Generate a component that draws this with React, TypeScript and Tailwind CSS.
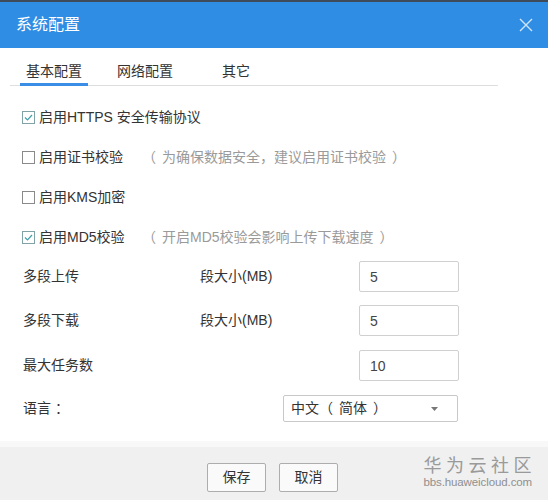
import React, { useState } from 'react';

const FONT = { fontFamily: "'Liberation Sans', 'Noto Sans CJK SC', sans-serif" };

const tabs = ['基本配置', '网络配置', '其它'];

const options = [
  { label: '启用HTTPS 安全传输协议', checked: true, hint: '' },
  { label: '启用证书校验', checked: false, hint: '（为确保数据安全，建议启用证书校验）' },
  { label: '启用KMS加密', checked: false, hint: '' },
  { label: '启用MD5校验', checked: true, hint: '（开启MD5校验会影响上传下载速度）' },
];

// full-width brackets get a little air around them, like centred CJK punctuation
const Bracketed = ({ text }: { text: string }) => (
  <>
    {text.split(/([（）])/).map((part, i) =>
      part === '（' ? (
        <span key={i} className="mr-[6px]">{part}</span>
      ) : part === '）' ? (
        <span key={i} className="ml-[6px]">{part}</span>
      ) : (
        part
      )
    )}
  </>
);

const CheckBox = ({ checked }: { checked: boolean }) => (
  <svg width="13" height="13" viewBox="0 0 13 13" className="shrink-0">
    <rect x="0.5" y="0.5" width="12" height="12" fill="#fff" stroke={checked ? '#7fa3a6' : '#8a8a8a'} />
    {checked && <polyline points="3,6.5 5.5,9 10,4" fill="none" stroke="#3f9fae" strokeWidth="1.2" />}
  </svg>
);

const NumberInput = ({ value }: { value: string }) => (
  <input
    defaultValue={value}
    className="w-[100px] h-[31px] border border-[#d0d0d0] rounded-[2px] pl-[10px] text-[14px] text-[#444] outline-none"
    style={FONT}
  />
);

export default function App() {
  const [tab, setTab] = useState(0);

  return (
    <div className="w-[548px] h-[500px] bg-white flex flex-col text-[#333] text-[14px] overflow-hidden" style={FONT}>
      {/* title bar */}
      <div className="h-[2px] bg-[#3d4b5a]" />
      <div className="h-[46px] bg-[#2f8de4] flex items-center justify-between pl-[16px] pr-[14px]">
        <span className="text-white text-[16px] leading-none">系统配置</span>
        <svg width="16" height="16" viewBox="0 0 16 16">
          <path d="M2 2 L14 14 M14 2 L2 14" stroke="#cfe6fb" strokeWidth="1.4" />
        </svg>
      </div>

      {/* tabs */}
      <div className="mt-[10px] ml-[10px] w-[488px] border-b border-[#dedede] flex gap-[23px] pl-[10px]">
        {tabs.map((t, i) => (
          <button
            key={t}
            onClick={() => setTab(i)}
            className={`w-[68px] h-[28px] text-[14px] leading-none text-center border-b-[3px] -mb-[1px] ${
              tab === i ? 'border-[#3a8ee6]' : 'border-transparent'
            }`}
          >
            {t}
          </button>
        ))}
      </div>

      {/* switches */}
      <div className="mt-[11px] pl-[22px] flex flex-col">
        {options.map((o) => (
          <div key={o.label} className="h-[40px] flex items-center">
            <CheckBox checked={o.checked} />
            <span className="ml-[4px] w-[103px] whitespace-nowrap">{o.label}</span>
            {o.hint && (
              <span className="text-[#9a9a9a] whitespace-nowrap">
                <Bracketed text={o.hint} />
              </span>
            )}
          </div>
        ))}
      </div>

      {/* numeric settings */}
      <div className="mt-[4px] pl-[23px] flex flex-col gap-[13px]">
        <div className="h-[31px] flex items-center">
          <span className="w-[177px]">多段上传</span>
          <span className="w-[159px]">段大小(MB)</span>
          <NumberInput value="5" />
        </div>
        <div className="h-[31px] flex items-center">
          <span className="w-[177px]">多段下载</span>
          <span className="w-[159px]">段大小(MB)</span>
          <NumberInput value="5" />
        </div>
        <div className="h-[31px] flex items-center mt-[1px]">
          <span className="w-[336px]">最大任务数</span>
          <NumberInput value="10" />
        </div>
        <div className="h-[27px] flex items-center mt-[1px]">
          <span className="w-[260px]">
            语言<span className="ml-[4px]">：</span>
          </span>
          <div className="w-[175px] h-[27px] border border-[#c8c8c8] rounded-[2px] flex items-center justify-between pl-[7px] pr-[19px]">
            <span className="whitespace-nowrap">
              中文<Bracketed text="（简体）" />
            </span>
            <svg width="7" height="4" viewBox="0 0 7 4">
              <polygon points="0,0 7,0 3.5,4" fill="#777" />
            </svg>
          </div>
        </div>
      </div>

      {/* footer */}
      <div className="mt-auto h-[59px] border-t-[6px] border-[#f8f8f8] bg-[#f0f0f0] relative flex items-center justify-center gap-[13px] pt-[8px] pr-[3px]">
        <button className="w-[59px] h-[29px] bg-[#fafafa] border border-[#adadad] rounded-[2px] text-[14px] text-[#333]">保存</button>
        <button className="w-[59px] h-[29px] bg-[#fafafa] border border-[#adadad] rounded-[2px] text-[14px] text-[#333]">取消</button>

        <div className="absolute right-[12px] top-[9px] flex flex-col items-center text-[#9a9a9a] pointer-events-none">
          <span className="text-[18px] leading-[20px] tracking-[4.5px] pl-[4px]">华为云社区</span>
          <span className="text-[11.5px] leading-[13px] tracking-[-0.1px] text-[#8f8f8f]">bbs.huaweicloud.com</span>
        </div>
      </div>
    </div>
  );
}
